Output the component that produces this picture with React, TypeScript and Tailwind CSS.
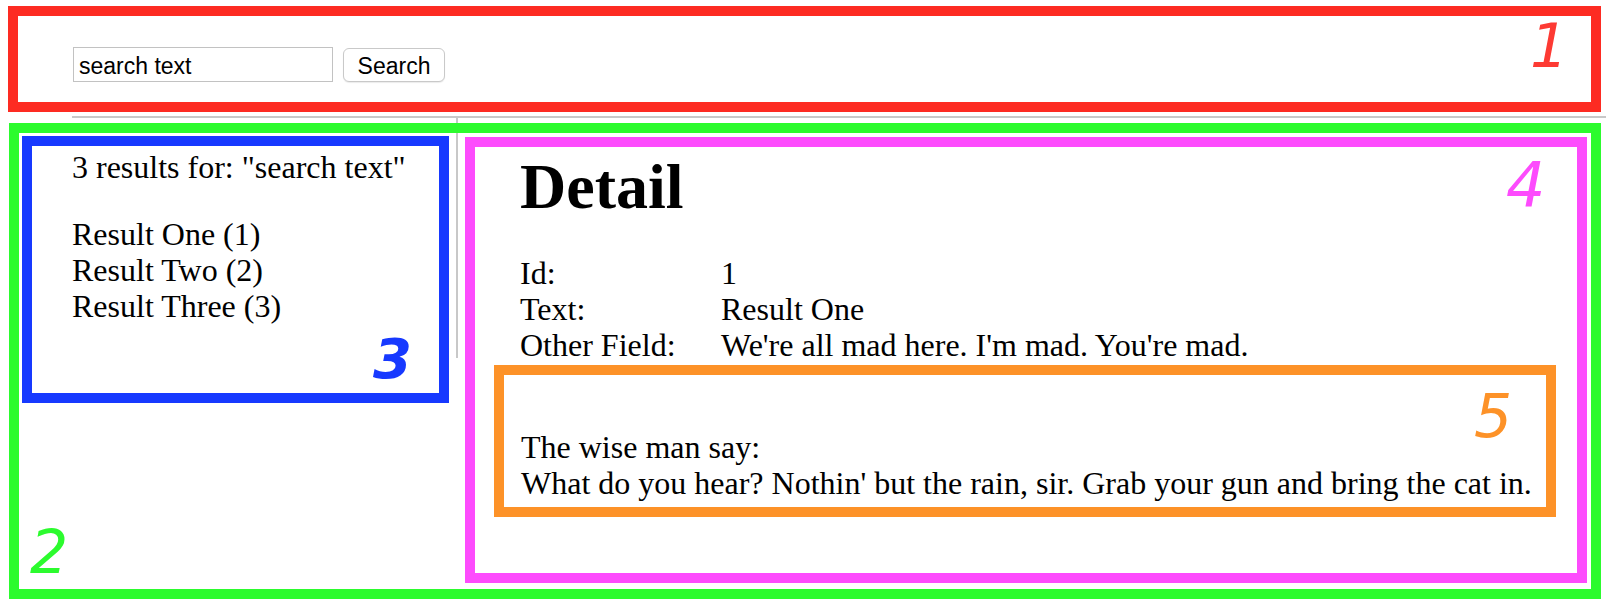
import React from 'react';

const fields: [string, string][] = [
  ['Id:', '1'],
  ['Text:', 'Result One'],
  ['Other Field:', "We're all mad here. I'm mad. You're mad."],
];

const results = ['Result One (1)', 'Result Two (2)', 'Result Three (3)'];

// annotation frames drawn over the screenshot
const Frame: React.FC<{ className: string }> = ({ className }) => (
  <div className={`pointer-events-none absolute border-[10px] ${className}`} />
);

const Mark: React.FC<{ className: string; children: React.ReactNode }> = ({ className, children }) => (
  <span
    className={`pointer-events-none absolute font-['DejaVu_Sans',sans-serif] leading-none italic ${className}`}
  >
    {children}
  </span>
);

const App: React.FC = () => {
  return (
    <div className="relative h-[606px] w-[1606px] overflow-hidden bg-white font-['Liberation_Serif',serif] text-black">
      <header className="ml-[72px] h-[118px] border-b-2 border-[#c8c8c8] pl-px pt-[47px]">
        <div className="flex items-start gap-[10px]">
          <input
            readOnly
            value="search text"
            className="h-[35px] w-[260px] border border-[#c2c2c2] px-[5px] pt-[3px] font-['Liberation_Sans',sans-serif] text-[23px] text-black outline-none"
          />
          <button className="mt-px h-[34px] w-[102px] rounded-[6px] border border-[#c9c9c9] bg-white font-['Liberation_Sans',sans-serif] text-[23px] shadow-[0_1px_1px_rgba(0,0,0,0.08)]">
            Search
          </button>
        </div>
      </header>

      <div className="ml-[72px] flex items-start">
        <aside className="h-[240px] w-[386px] shrink-0 border-r-2 border-[#c8c8c8] pt-[31px] text-[32px] leading-[36px]">
          <p>3 results for: "search text"</p>
          <ul className="mt-[31px]">
            {results.map((r) => (
              <li key={r}>{r}</li>
            ))}
          </ul>
        </aside>

        <main className="flex-1 pl-[62px] pt-[33px]">
          <h1 className="text-[64px] font-bold leading-[72px]">Detail</h1>
          <div className="mt-[32px] grid grid-cols-[201px_1fr] text-[32px] leading-[36px]">
            {fields.map(([label, value]) => (
              <React.Fragment key={label}>
                <span>{label}</span>
                <span>{value}</span>
              </React.Fragment>
            ))}
          </div>
          <div className="mt-[66px] pl-px text-[32px] leading-[36px]">
            <p>The wise man say:</p>
            <p>What do you hear? Nothin' but the rain, sir. Grab your gun and bring the cat in.</p>
          </div>
        </main>
      </div>

      <Frame className="left-[8px] top-[6px] h-[106px] w-[1593px] border-[#fd2b22]" />
      <Frame className="left-[9px] top-[123px] h-[476px] w-[1592px] border-[#2cfb2e]" />
      <Frame className="left-[22px] top-[136px] h-[267px] w-[427px] border-[#1739ff]" />
      <Frame className="left-[465px] top-[137px] h-[446px] w-[1122px] border-[#fd4bfd]" />
      <Frame className="left-[494px] top-[365px] h-[152px] w-[1062px] border-[#fd9228]" />

      <Mark className="left-[1530px] top-[16px] text-[60px] text-[#fd3a33]">1</Mark>
      <Mark className="left-[30px] top-[522px] text-[60px] text-[#2cfb2e]">2</Mark>
      <Mark className="left-[373px] top-[331px] text-[56px] font-bold text-[#1739ff]">3</Mark>
      <Mark className="left-[1506px] top-[155px] text-[62px] text-[#fd4bfd]">4</Mark>
      <Mark className="left-[1474px] top-[386px] text-[60px] text-[#fd9228]">5</Mark>
    </div>
  );
};

export default App;
